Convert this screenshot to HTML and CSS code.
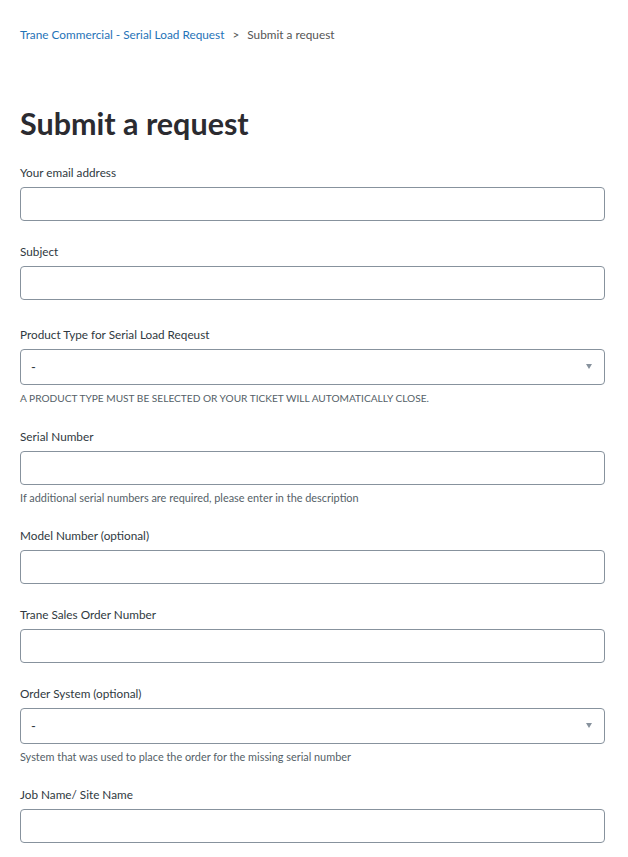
FILE: index.html
```html
<!DOCTYPE html>
<html lang="en">
  <head>
    <meta charset="UTF-8" />
    <meta name="viewport" content="width=device-width, initial-scale=1.0" />
    <title>Submit a request | Trane Commercial - Serial Load Request</title>
    <link rel="stylesheet" href="styles.css">
  </head>
  <body>
    <div class="page">
      <!-- Breadcrumbs -->
      <nav class="breadcrumbs">
        <a href="#">Trane Commercial - Serial Load Request</a>
        <span class="sep">&gt;</span>
        <span>Submit a request</span>
      </nav>

      <h1>Submit a request</h1>

      <form class="request-form">
        <div class="form-field">
          <label for="email">Your email address</label>
          <input type="email" id="email" name="email" />
        </div>

        <div class="form-field">
          <label for="subject">Subject</label>
          <input type="text" id="subject" name="subject" />
        </div>

        <div class="form-field form-field-spaced">
          <label for="product">Product Type for Serial Load Reqeust</label>
          <div class="select-wrap">
            <select id="product" name="product">
              <option>-</option>
            </select>
          </div>
          <p class="hint">A product type must be selected or your ticket will automatically close.</p>
        </div>

        <div class="form-field">
          <label for="serial">Serial Number</label>
          <input type="text" id="serial" name="serial" />
          <p class="hint hint-normal">If additional serial numbers are required, please enter in the description</p>
        </div>

        <div class="form-field">
          <label for="model">Model Number (optional)</label>
          <input type="text" id="model" name="model" />
        </div>

        <div class="form-field">
          <label for="salesorder">Trane Sales Order Number</label>
          <input type="text" id="salesorder" name="salesorder" />
        </div>

        <div class="form-field">
          <label for="ordersystem">Order System (optional)</label>
          <div class="select-wrap">
            <select id="ordersystem" name="ordersystem">
              <option>-</option>
            </select>
          </div>
          <p class="hint hint-normal">System that was used to place the order for the missing serial number</p>
        </div>

        <div class="form-field">
          <label for="jobname">Job Name/ Site Name</label>
          <input type="text" id="jobname" name="jobname" />
        </div>
      </form>
    </div>
  </body>
</html>
```

FILE: styles.css
```css
/* Reset */
* {
  margin: 0;
  padding: 0;
  box-sizing: border-box;
  font-family: Lato, "Open Sans", Arial, sans-serif;
}

body {
  color: #2f3941;
  background-color: #ffffff;
}

.page {
  padding: 0 23px 0 20px;
}

.breadcrumbs {
  margin-top: 26px;
  font-size: 11.8px;
  line-height: 18px;
  color: #555555;
}

.breadcrumbs a {
  color: #1f73b7;
  text-decoration: none;
}

.breadcrumbs .sep {
  margin: 0 5px;
}

h1 {
  margin-top: 59px;
  font-size: 30.5px;
  line-height: 40px;
  font-weight: 700;
  color: #2b2b30;
}

.request-form {
  margin-top: 21px;
}

.form-field + .form-field {
  margin-top: 22px;
}

.form-field-spaced {
  margin-top: 26px !important;
}

label {
  display: block;
  font-size: 11.75px;
  line-height: 18px;
  margin-bottom: 5px;
  color: #2f3941;
}

input[type="text"],
input[type="email"] {
  display: block;
  width: 100%;
  height: 34px;
  border: 1px solid #87929d;
  border-radius: 4px;
  background-color: #fff;
  font-size: 13px;
  padding: 0 10px;
  outline: none;
}

.select-wrap {
  position: relative;
}

.select-wrap::after {
  content: "";
  position: absolute;
  right: 13px;
  top: 15px;
  border-left: 3px solid transparent;
  border-right: 3px solid transparent;
  border-top: 5px solid #87929d;
  pointer-events: none;
}

select {
  display: block;
  width: 100%;
  height: 36px;
  border: 1px solid #87929d;
  border-radius: 4px;
  background-color: #fff;
  color: #2f3941;
  font-size: 13px;
  padding: 0 10px;
  appearance: none;
  -webkit-appearance: none;
  outline: none;
}

.hint {
  margin-top: 5px;
  font-size: 10.15px;
  line-height: 16px;
  color: #555f68;
  text-transform: uppercase;
}

.hint-normal {
  text-transform: none;
  font-size: 10.9px;
  line-height: 15px;
}
```
